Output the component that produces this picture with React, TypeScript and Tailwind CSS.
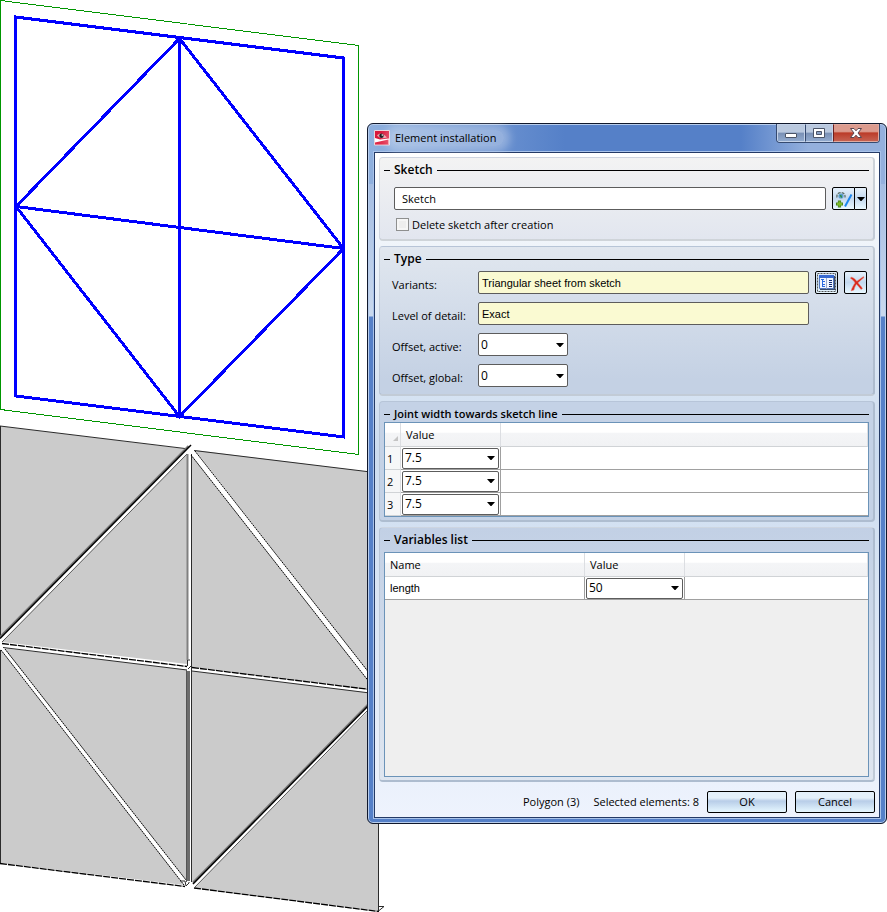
import { useState, type ReactNode } from 'react'
import { clsx } from 'clsx'

const SketchView = () => (
	<svg
		className="block h-[912px] w-[386px]"
		viewBox="0 0 386 912"
		fill="none"
		role="img"
		aria-label="Sketch and generated sheets"
	>
		{/* sketch plane */}
		<path d="M.5.5 358.5 45.5V454.5L.5 409.5Z" stroke="#009600" shapeRendering="crispEdges" />
		<g stroke="#0000ff" strokeWidth="3" shapeRendering="crispEdges">
			<path d="M15.5 17 343.5 58V437L15.5 396Z" />
			<path d="M179.500 38.500V416.500" />
			<path d="M16 206.500 179.500 38.500 343.500 248.500 179.500 416.500Z" />
			<path d="M16 206.500 343.500 248.500" />
		</g>

		{/* generated sheets */}
		<g fill="#cbcbcb">
			<path d="M0 426 187 449 0 638Z" />
			<path d="M187 454V664L2 642Z" />
			<path d="M191 455 370 683V690L191 667Z" />
			<path d="M195 450 379 473V690L370 674Z" />
			<path d="M0 649 184 885 0 863Z" />
			<path d="M4 648 187 670V881Z" />
			<path d="M191 671 379 694 192 883Z" />
			<path d="M379 700V911L194 888Z" />
		</g>
		<g stroke="#2b2b2b" strokeWidth="1">
			<path d="M.5 426V638M.5 650V863" />
			<path d="M0 426 185 448.500M194 450.500 379 473" />
			<path d="M187 454 2 642" stroke="#555" />
			<path d="M191.500 454V882" />
			<path d="M195 451 370 674M191 455 370 683" stroke="#000" strokeDasharray="2 0.6" />
			<path d="M5 649 186 880M1 650 184 885" stroke="#000" strokeDasharray="2 0.6" />
			<path d="M2 643.500 187 666.500M192 667.500 370 689.500" stroke="#000" strokeWidth="1.300" strokeDasharray="7 1" />
			<path d="M3 647.500 187 670M192 671 370 693" />
			<path d="M0 863.500 185 886.500M194 888 379 911.500" stroke="#000" strokeWidth="1.300" strokeDasharray="7 1" />
			<path d="M370 708 194 888" stroke="#555" />
			<path d="M378.500 820V911L384 906.500H379" />
			<path d="M180 881H185L186 886 189 883V882M187.500 666V660H190M188 669 191 666" />
		</g>
		<path d="M188.500 446 0 637" stroke="#777" strokeWidth="2" />
		<path d="M191 445 0 638.500" stroke="#000" strokeWidth="1.500" />
		<path d="M370 702.500 193 882.500" stroke="#777" strokeWidth="2" />
		<path d="M370 704 193 884" stroke="#000" strokeWidth="1.500" />
		<path d="M187.500 454V660" stroke="#808080" strokeWidth="2" />
		<path d="M188.500 671V881" stroke="#6c6c6c" strokeWidth="3" />
		<path d="M186.500 670V882" stroke="#555" />
	</svg>
)

const TitleIcon = () => (
	<svg className="size-4" viewBox="0 0 16 16" aria-hidden="true">
		<path d="M.5.5h15v14.500H.5Z" fill="#d9173a" stroke="#e9d5dc" />
		<path d="M1 8 6 9.500 15 8.500v6H1Z" fill="#fff" />
		<path d="M1 12.500 14.500 9.500V14.500H1Z" fill="#e02848" />
		<path d="M3 5.500C5 3 9 3 13 7.500 9 9 6 8.500 3 5.500Z" fill="#eba0a8" />
		<circle cx="7.500" cy="5.800" r="2.200" fill="#16161c" />
		<circle cx="8.300" cy="5" r=".8" fill="#fff" />
	</svg>
)

const SketchIcon = () => (
	<svg className="h-5 w-5" viewBox="0 0 20 20" fill="none" aria-hidden="true">
		<path d="M3 8.500C1.500 2 12 2 11 8.500" stroke="#5b6e68" strokeWidth="1.300" strokeDasharray="3 1" />
		<circle cx="7" cy="7" r="2.600" fill="#5d9ecd" />
		<path d="M5.500 6.500C7 5 9 7 7.500 9.300Z" fill="#2e8b45" />
		<path d="M5.500 11.500V18.500M2 15H9" stroke="#4a8520" strokeWidth="3.200" />
		<path d="M5.500 12.500V17.500M3 15H8" stroke="#7cb928" strokeWidth="2" />
		<path d="M17.500 5.500 11 17.500" stroke="#1c86ee" strokeWidth="2" />
	</svg>
)

const CatalogIcon = () => (
	<svg className="h-[21px] w-[21px]" viewBox="0 0 21 21" fill="none" aria-hidden="true">
		<path d="M1.500 1.500H19.500V19.500H1.500Z" stroke="#555" strokeDasharray="2 1" />
		<path d="M4 4H19V18H4Z" fill="#3a4c68" />
		<path d="M3.500 3.500H17.500V16.500H3.500Z" fill="#f2f7ff" stroke="#5679bd" />
		<path d="M3 3H18V6H3Z" fill="#3a6ad0" />
		<path d="M10.500 6V17" stroke="#9aaacb" />
		<path d="M5 7.500H8M6.500 8V15M6 9.500H9M6 12.500H9M6 14.500H9" stroke="#2b6be0" />
		<path d="M13 8.500H16M13 10.500H16M13 12.500H16M13 14.500H16" stroke="#102a70" />
	</svg>
)

const DeleteIcon = () => (
	<svg className="h-5 w-5" viewBox="0 0 20 20" aria-hidden="true">
		<path
			d="M5 4C8 4.500 9.500 6.500 10.800 8.200L17.500 3.500 18 4.500 12 9.800C13.500 12 15.500 13.500 16.500 15.500L15 16.500C13.500 14.500 12 13 10.500 11.200 9 13 8.500 15 8 17L5 18C6 14.500 7.500 12 9 10 8 8 6.500 6.500 4.500 5.500Z"
			fill="#d9281c"
			stroke="#e98a7d"
			strokeWidth=".5"
		/>
	</svg>
)

const Arrow = () => (
	<svg className="h-1 w-2" viewBox="0 0 8 4" aria-hidden="true">
		<path d="M0 0H8L4 4.500Z" fill="#000" />
	</svg>
)

interface ComboProps {
	id?: string
	label?: string
	initial: string
	className: string
}

const Combo = ({ id, label, initial, className }: ComboProps) => {
	const [value, setValue] = useState(initial)
	return (
		<div className={clsx('relative', className)}>
			<select
				id={id}
				aria-label={label}
				value={value}
				onChange={e => setValue(e.target.value)}
				className="block h-full w-full appearance-none rounded-[2px] border border-[#5c5c5c] bg-white pl-0.5 text-[12px] leading-4"
			>
				<option>{initial}</option>
			</select>
			<span className="pointer-events-none absolute inset-y-0 right-1 flex items-center">
				<Arrow />
			</span>
		</div>
	)
}

interface GroupProps {
	title: string
	className: string
	small?: boolean
	children: ReactNode
}

const Group = ({ title, className, small, children }: GroupProps) => (
	<section
		className={clsx(
			'rounded-[4px] border-t border-r-2 border-b-2 border-l border-t-[#8090a030] border-r-[#8090a050] border-b-[#8090a050] border-l-[#8090a030] pr-1 pl-1',
			className
		)}
	>
		<h2
			className={clsx(
				'flex items-center gap-1 font-semibold',
				small ? 'h-5 pt-1 text-[11px]' : 'h-6 text-[12px]'
			)}
		>
			<span className="h-px w-1.5 bg-black" />
			{title}
			<span className="h-px flex-1 bg-black" />
		</h2>
		{children}
	</section>
)

const toolButton =
	'flex h-[23px] items-center justify-center border border-black bg-linear-to-b from-[#e6f1fb] via-[#c3d8ee] to-[#e9f8ff]'
const footerButton =
	'h-[22px] w-20 rounded-[2px] border border-black bg-linear-to-b from-[#e4f0fa] from-30% via-[#b8cde8] via-45% to-[#e6f7ff]'
const field = 'h-[23px] min-w-0 flex-1 rounded-[2px] border border-[#5c5c5c]'
const plainText = "font-['Liberation_Sans',sans-serif]"
const headCell =
	'border-r border-b border-r-[#dcdee2] border-b-[#d0d3d6] bg-linear-to-b from-white from-40% via-[#f4f5f7] via-45% to-[#f1f2f4] text-left font-normal'

const FormRow = ({ id, label, children }: { id: string; label: string; children: ReactNode }) => (
	<div className="flex h-[23px] items-center">
		<label htmlFor={id} className="w-[86px] pt-1 whitespace-nowrap">
			{label}
		</label>
		{children}
	</div>
)

const TitleBar = () => (
	<header className="flex h-7 items-start justify-between">
		<div className="flex h-7 items-center gap-px">
			<TitleIcon />
			<h1 className="rounded-full bg-white/30 pr-2 pl-1 shadow-[0_0_8px_6px_#ffffff4d]">
				Element installation
			</h1>
		</div>
		<div className="flex h-[19px] overflow-hidden rounded-b-[4px] border border-t-0 border-[#354a70]">
			<button
				type="button"
				aria-label="Minimize"
				className="flex w-7 items-center justify-center border border-[#c4d2e8] bg-linear-to-b from-[#bac9df] from-45% via-[#7990b5] via-50% to-[#91aace] pt-1"
			>
				<span className="h-[5px] w-3 rounded-[1px] border border-[#4c5568] bg-white" />
			</button>
			<button
				type="button"
				aria-label="Maximize"
				className="flex w-7 items-center justify-center border border-l-[#354a70] border-[#c4d2e8] bg-linear-to-b from-[#bac9df] from-45% via-[#7990b5] via-50% to-[#91aace]"
			>
				<svg className="h-2.5 w-3" viewBox="0 0 12 10" aria-hidden="true">
					<path d="M.5.5h11v9H.5Z" fill="#fff" stroke="#4c5568" />
					<path d="M3.500 3.500h5v3h-5Z" fill="#8ba2c6" stroke="#4c5568" />
				</svg>
			</button>
			<button
				type="button"
				aria-label="Close"
				className="flex w-[46px] items-center justify-center border border-l-[#6d2020] border-[#e0aaa0] bg-linear-to-b from-[#dc9b8e] from-40% via-[#bb3b28] via-50% to-[#c56050]"
			>
				<svg className="h-2.5 w-3" viewBox="0 0 12 10" aria-hidden="true">
					<path
						d="M.5.500H4L6 2.800 8 .500H11.500L8 5 11.500 9.500H8L6 7.200 4 9.500H.500L4 5Z"
						fill="#fff"
						stroke="#5b4650"
					/>
				</svg>
			</button>
		</div>
	</header>
)

const JointTable = () => (
	<table className="w-full table-fixed border-separate border-spacing-0 border border-[#6b93b8] bg-white">
		<colgroup>
			<col className="w-4" />
			<col className="w-[100px]" />
			<col />
		</colgroup>
		<thead>
			<tr className="h-6">
				<th className={headCell}>
					<svg className="mt-2 ml-2 size-[5px]" viewBox="0 0 5 5" aria-hidden="true">
						<path d="M5 0V5H0Z" fill="#c4c4c4" />
					</svg>
				</th>
				<th className={clsx(headCell, 'pl-[5px]')}>Value</th>
				<th className={headCell} />
			</tr>
		</thead>
		<tbody>
			{[1, 2, 3].map(row => (
				<tr key={row} className="h-[23px]">
					<th className="border-r border-b border-r-[#dcdee2] border-b-[#d0d3d6] bg-[#f6f7f8] p-0 pt-0.5 pl-0.5 text-left font-normal">
						{row}
					</th>
					<td className="border-r border-b border-[#a0a0a0] p-0">
						<Combo label={`Joint width ${row}`} initial="7.5" className="ml-px h-[21px] w-[97px]" />
					</td>
					<td className="border-b border-[#a0a0a0] p-0" />
				</tr>
			))}
		</tbody>
	</table>
)

const VariablesTable = () => (
	<div className="flex-1 border border-[#6b93b8] bg-[#efefef]">
		<table className="w-full table-fixed border-separate border-spacing-0 bg-white">
			<colgroup>
				<col className="w-[200px]" />
				<col className="w-[100px]" />
				<col />
			</colgroup>
			<thead>
				<tr className="h-6">
					<th className={clsx(headCell, 'pl-[5px]')}>Name</th>
					<th className={clsx(headCell, 'pl-[5px]')}>Value</th>
					<th className={headCell} />
				</tr>
			</thead>
			<tbody>
				<tr className="h-[23px]">
					<td className={clsx(plainText, 'border-r border-b border-[#a0a0a0] p-0 pl-[5px]')}>
						length
					</td>
					<td className="border-r border-b border-[#a0a0a0] p-0">
						<Combo label="length value" initial="50" className="ml-px h-[21px] w-[97px]" />
					</td>
					<td className="border-b border-[#a0a0a0] p-0" />
				</tr>
			</tbody>
		</table>
	</div>
)

const ElementDialog = () => {
	const [sketch, setSketch] = useState('Sketch')
	const [deleteSketch, setDeleteSketch] = useState(false)

	return (
		<div
			role="dialog"
			aria-label="Element installation"
			className="rounded-[6px] border border-[#10182c] bg-[linear-gradient(90deg,#8fb0de_0,#5580c8_38%,#5580c8_72%,#94b0dd_85%,#94b0dd_100%),linear-gradient(180deg,#94b0dd_0,#c9d9ee_192px,#5580c8_193px,#5580c8_100%)] bg-[length:100%_60px,100%_100%] bg-no-repeat px-1.5 pb-[5px] shadow-[inset_0_0_0_1px_#b8cdec]"
		>
			<TitleBar />
			<main className="flex flex-col gap-[5px] border border-[#243a66] bg-linear-to-b from-white via-[#ccdcef] via-45% to-[#eef3fd] px-1 pt-1 pb-1 outline outline-[#a9c3ea]">
				<Group title="Sketch" className="bg-linear-to-b from-[#f3f3f3] to-[#e2e6ef] pb-[7px]">
					<div className="flex gap-1.5 pt-[5px] pr-0.5 pl-2.5">
						<input
							aria-label="Sketch name"
							value={sketch}
							onChange={e => setSketch(e.target.value)}
							className={clsx(field, 'bg-white pl-[7px]')}
						/>
						<div className="flex">
							<button
								type="button"
								aria-label="Select sketch"
								className={clsx(toolButton, 'w-[23px] rounded-l-[2px]')}
							>
								<SketchIcon />
							</button>
							<button
								type="button"
								aria-label="Sketch options"
								className={clsx(toolButton, 'w-3 rounded-r-[2px] border-l-0')}
							>
								<Arrow />
							</button>
						</div>
					</div>
					<label className="flex h-[22px] items-center gap-[3px] pt-[7px] pl-3">
						<input
							type="checkbox"
							checked={deleteSketch}
							onChange={e => setDeleteSketch(e.target.checked)}
							className="size-[13px] appearance-none border border-[#8e8f8f] bg-[#eeeeee] shadow-[inset_0_0_0_2px_#f6f6f6] checked:bg-[#4b6eb0]"
						/>
						Delete sketch after creation
					</label>
				</Group>

				<Group title="Type" className="bg-linear-to-b from-[#e1e7ef] to-[#c4d1e4] to-90% pb-[7px]">
					<div className="flex flex-col gap-2 pr-0.5 pl-2">
						<FormRow id="variants" label="Variants:">
							<input
								id="variants"
								readOnly
								value="Triangular sheet from sketch"
								className={clsx(field, plainText, 'bg-[#fafad2] pl-[3px]')}
							/>
							<button
								type="button"
								aria-label="Choose variant"
								className={clsx(toolButton, 'ml-1.5 w-[23px] rounded-[2px]')}
							>
								<CatalogIcon />
							</button>
							<button
								type="button"
								aria-label="Clear variant"
								className={clsx(toolButton, 'ml-1.5 w-[23px] rounded-[2px]')}
							>
								<DeleteIcon />
							</button>
						</FormRow>
						<FormRow id="detail" label="Level of detail:">
							<input
								id="detail"
								readOnly
								value="Exact"
								className={clsx(field, plainText, 'mr-[58px] bg-[#fafad2] pl-[3px]')}
							/>
						</FormRow>
						<FormRow id="offset-active" label="Offset, active:">
							<Combo id="offset-active" initial="0" className="h-[23px] w-[90px]" />
						</FormRow>
						<FormRow id="offset-global" label="Offset, global:">
							<Combo id="offset-global" initial="0" className="h-[23px] w-[90px]" />
						</FormRow>
					</div>
				</Group>

				<Group title="Joint width towards sketch line" small className="bg-[#c4d2e6] pb-[3px]">
					<JointTable />
				</Group>

				<Group
					title="Variables list"
					className="flex h-[255px] flex-col bg-linear-to-b from-[#c2d0e5] to-[#dfe6f0] pb-[3px]"
				>
					<VariablesTable />
				</Group>

				<footer className="flex items-center justify-end gap-2 pt-1">
					<span className="mr-1.5">Polygon (3)</span>
					<span>Selected elements: 8</span>
					<button type="button" className={footerButton}>
						OK
					</button>
					<button type="button" className={footerButton}>
						Cancel
					</button>
				</footer>
			</main>
		</div>
	)
}

export default function App() {
	return (
		<div className="relative min-h-screen overflow-hidden bg-white font-['Open_Sans','Noto_Sans',sans-serif] text-[11px] leading-4 text-black">
			<SketchView />
			<div className="absolute top-[123px] right-0 left-[367px]">
				<ElementDialog />
			</div>
		</div>
	)
}
